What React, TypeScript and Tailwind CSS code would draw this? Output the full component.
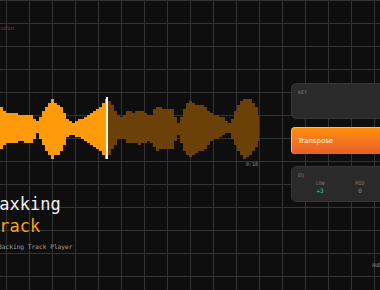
import React from "react";

const keys: [number, number, number][] = [
  [0, 22, 23], [8, 15, 14], [20, 14, 14], [33, 13, 13], [37, 7, 5], [42, 14, 14],
  [52, 30, 31], [60, 22, 24], [68, 10, 9], [73, 5, 6], [80, 9, 9], [95, 17, 18],
  [106, 29, 30], [112, 24, 22], [118, 14, 12], [123, 10, 9], [128, 17, 14],
  [140, 17, 15], [150, 13, 13], [157, 21, 21], [172, 20, 20], [178, 4, 6],
  [186, 24, 26], [193, 27, 28], [205, 21, 20], [215, 13, 11], [225, 10, 6],
  [230, 5, 5], [238, 22, 22], [245, 32, 31], [252, 27, 25], [259, 17, 14],
];

function envelope(x: number) {
  for (let i = 0; i < keys.length - 1; i++) {
    const [x0, t0, b0] = keys[i];
    const [x1, t1, b1] = keys[i + 1];
    if (x >= x0 && x <= x1) {
      const f = (x - x0) / (x1 - x0);
      return [t0 + (t1 - t0) * f, b0 + (b1 - b0) * f];
    }
  }
  return [14, 14];
}

const CENTER = 33.5;
const PLAYHEAD = 106;

function Waveform() {
  const bars = [];
  for (let x = 0; x < 259; x += 3) {
    const [t, b] = envelope(x + 1.5);
    const j = Math.sin(x * 1.7) * 0.8;
    const top = Math.round((CENTER - t - j) / 2) * 2;
    const bottom = Math.round((CENTER + b + j) / 2) * 2;
    bars.push(
      <rect
        key={x}
        x={x}
        y={top}
        width={3}
        height={bottom - top}
        fill={x < PLAYHEAD ? "#ff9a0b" : "#6b4109"}
      />
    );
  }
  return (
    <svg width={259} height={66} viewBox="0 0 259 66" shapeRendering="crispEdges">
      {bars}
      <rect x={PLAYHEAD} y={2} width={2} height={62} fill="#fff3e0" />
    </svg>
  );
}

export default function App() {
  return (
    <div className="relative w-[380px] h-[290px] overflow-hidden bg-[#0e0e0e] bg-[linear-gradient(to_right,#333333_1px,transparent_1px),linear-gradient(to_bottom,#333333_1px,transparent_1px)] bg-[size:23px_23px] bg-[position:6px_0px] font-['DejaVu_Sans_Mono',monospace]">
      <div className="flex">
        <div className="flex flex-col w-[259px] shrink-0">
          <div className="pt-[25px] h-[32px] text-[5.5px] leading-[6px] text-[#8a3535] -ml-[6px]">studio</div>
          <div className="mt-[63px]">
            <Waveform />
          </div>
          <div className="flex justify-end pr-[1px] text-[5px] leading-[6px] text-[#9a9a9a]">0:18</div>
          <div className="mt-[26px] -ml-[11px] text-[17px] leading-[22px] text-[#f2f2f2]">
            <div>Baxking</div>
            <div className="text-[#f7a21b]">Track</div>
          </div>
          <div className="mt-[6px] -ml-[2px] text-[6.2px] leading-[8px] text-[#a0a0a0]">Backing Track Player</div>
        </div>
        <div className="ml-[32px] pt-[83px] flex flex-col w-[110px] shrink-0">
          <div className="h-[36px] rounded-[5px] bg-[#2a2a2a] border border-[#363636] px-[6px] pt-[5px]">
            <div className="text-[5px] leading-[6px] text-[#7a7a7a]">KEY</div>
          </div>
          <div className="mt-[8px] h-[27px] rounded-[4px] bg-[linear-gradient(to_bottom,#ff8e0c,#e85f2b)] border-l border-t border-[#ffb36b] flex items-center px-[6px]">
            <span className="text-[7px] text-white font-['DejaVu_Sans',sans-serif]">Transpose</span>
          </div>
          <div className="mt-[12px] h-[36px] rounded-[5px] bg-[#2a2a2a] border border-[#363636] px-[6px] pt-[5px]">
            <div className="text-[5px] leading-[6px] text-[#7a7a7a]">EQ</div>
            <div className="flex mt-[2px] text-[5px] leading-[7px]">
              <div className="w-[40px] flex flex-col items-center ml-[2px]">
                <span className="text-[#7a7a7a]">LOW</span>
                <span className="text-[#2fd3a2] text-[6px]">+3</span>
              </div>
              <div className="w-[40px] flex flex-col items-center">
                <span className="text-[#7a7a7a]">MID</span>
                <span className="text-[#8a8a8a] text-[6px]">0</span>
              </div>
            </div>
          </div>
        </div>
      </div>
      <div className="absolute left-[372px] top-[262px] text-[5px] text-[#8a8a8a]">AUDIO</div>
    </div>
  );
}
